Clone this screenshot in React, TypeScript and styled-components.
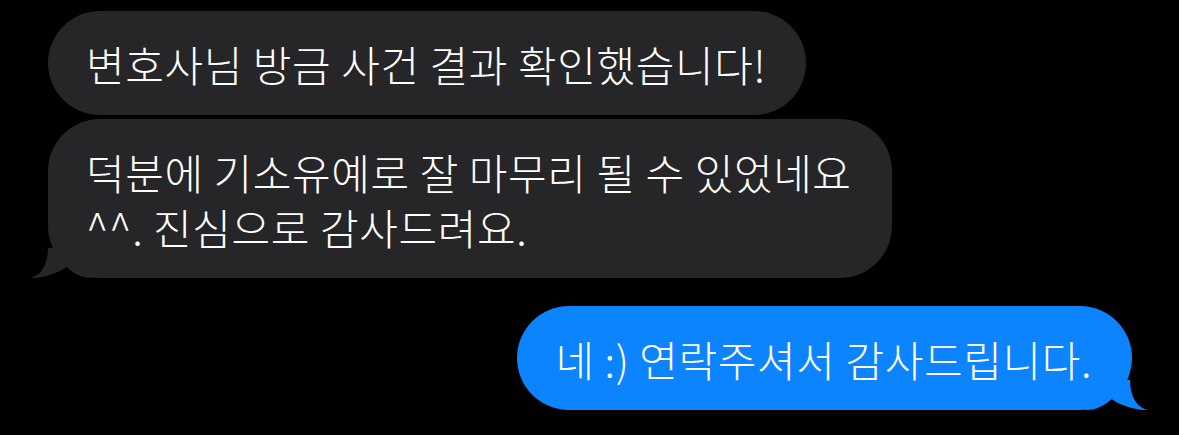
import styled, { createGlobalStyle } from 'styled-components';

const GlobalStyle = createGlobalStyle`
  html, body {
    margin: 0;
    padding: 0;
    background: #000;
  }
  body {
    font-family: "Noto Sans CJK KR", "Noto Sans", sans-serif;
    -webkit-font-smoothing: antialiased;
  }
`;

const Thread = styled.div`
  display: flex;
  flex-direction: column;
  gap: 28px;
  width: 1179px;
  height: 435px;
  box-sizing: border-box;
  padding: 11px 47px 0 48px;
  background: #000;
`;

const Group = styled.div<{ $mine?: boolean }>`
  display: flex;
  flex-direction: column;
  align-items: ${(p) => (p.$mine ? 'flex-end' : 'flex-start')};
  gap: 4px;
`;

const Bubble = styled.div<{ $mine?: boolean }>`
  position: relative;
  box-sizing: border-box;
  padding: 25px 40px 24px 38px;
  border-radius: 52px;
  background: ${(p) => (p.$mine ? '#0b84fe' : '#262629')};
  color: #fff;
  font-size: 42px;
  font-weight: 300;
  line-height: 55px;
  letter-spacing: 0.6px;
  white-space: nowrap;
`;

const Tail = styled.svg<{ $mine?: boolean }>`
  position: absolute;
  bottom: 0;
  width: 64px;
  height: 34px;
  ${(p) =>
    p.$mine
      ? 'right: -16px; transform: scaleX(-1);'
      : 'left: -18px;'}
`;

function BubbleTail({ mine, color }: { mine?: boolean; color: string }) {
  return (
    <Tail $mine={mine} viewBox="0 0 64 34" aria-hidden>
      <path
        d="M18 4 C18 22 10 32 0 34 C8 35 28 30 36.7 22.7 C42 29 52 34 62 34 L62 4 Z"
        fill={color}
      />
    </Tail>
  );
}

export default function App() {
  return (
    <>
      <GlobalStyle />
      <Thread>
        <Group>
          <Bubble>변호사님 방금 사건 결과 확인했습니다!</Bubble>
          <Bubble>
            덕분에 기소유예로 잘 마무리 될 수 있었네요
            <br />
            ^^. 진심으로 감사드려요.
            <BubbleTail color="#262629" />
          </Bubble>
        </Group>
        <Group $mine>
          <Bubble $mine>
            네 :) 연락주셔서 감사드립니다.
            <BubbleTail mine color="#0b84fe" />
          </Bubble>
        </Group>
      </Thread>
    </>
  );
}
